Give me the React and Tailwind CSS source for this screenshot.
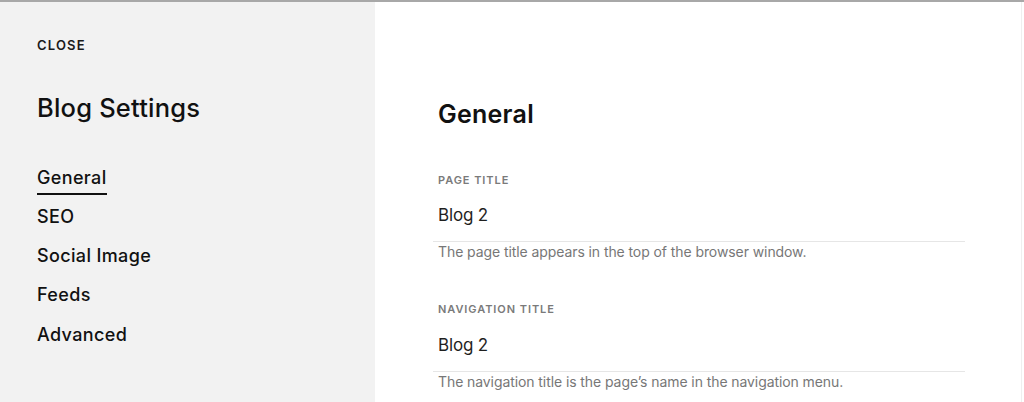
import React from 'react';

const navItems = ['General', 'SEO', 'Social Image', 'Feeds', 'Advanced'];

const fields = [
    { label: 'PAGE TITLE', value: 'Blog 2', help: 'The page title appears in the top of the browser window.' },
    { label: 'NAVIGATION TITLE', value: 'Blog 2', help: 'The navigation title is the page\u2019s name in the navigation menu.' },
];

const Field = ({ label, value, help, first }) => (
    <div className={first ? 'mt-[43.5px]' : 'mt-[41px]'}>
        <div className="pl-[5px] text-[11px] leading-[14px] font-semibold tracking-[0.085em] text-[#7a7a7a]">{label}</div>
        <div className="mt-[17.8px] pl-[5px] pb-[14.5px] text-[17px] leading-[22px] tracking-[-0.01em] text-[#1f1f1f] border-b border-[#e6e6e6]">{value}</div>
        <div className="mt-[1.6px] pl-[5px] text-[14px] leading-[18px] tracking-[-0.006em] text-[#777777]">{help}</div>
    </div>
);

const App = () => {
    return (
        <div className="flex h-[402px] w-[1024px] overflow-hidden border-t-2 border-[#a8a8a8] bg-white font-['Inter',sans-serif]">
            <aside className="w-[375px] shrink-0 bg-[#f2f2f2] pl-[37px] pt-[35px]">
                <div className="text-[13px] leading-[16px] font-semibold tracking-[0.09em] text-[#1a1a1a]">CLOSE</div>
                <h1 className="mt-[40px] text-[25.5px] leading-[30px] font-medium tracking-[0.008em] text-[#111111]">Blog Settings</h1>
                <nav className="mt-[42.5px] flex flex-col items-start gap-[15.25px]">
                    {navItems.map((item, i) => (
                        <a
                            key={item}
                            href="#"
                            className={
                                i === 0
                                    ? 'text-[18px] leading-[24px] font-medium tracking-[0.02em] text-[#111111] border-b-2 border-[#111111] pb-[3px] mb-[-5px]'
                                    : 'text-[18px] leading-[24px] font-medium tracking-[0.02em] text-[#111111]'
                            }
                        >
                            {item}
                        </a>
                    ))}
                </nav>
            </aside>
            <main className="flex-1 pl-[58px] pt-[97px]">
                <div className="w-[532px]">
                    <h2 className="pl-[5px] text-[25px] leading-[30px] font-semibold tracking-[0.01em] text-[#111111]">General</h2>
                    {fields.map((f, i) => (
                        <Field key={f.label} {...f} first={i === 0} />
                    ))}
                </div>
            </main>
            <div className="w-[3px] shrink-0 border-l border-[#efefef] bg-white" />
        </div>
    );
};

export default App;
